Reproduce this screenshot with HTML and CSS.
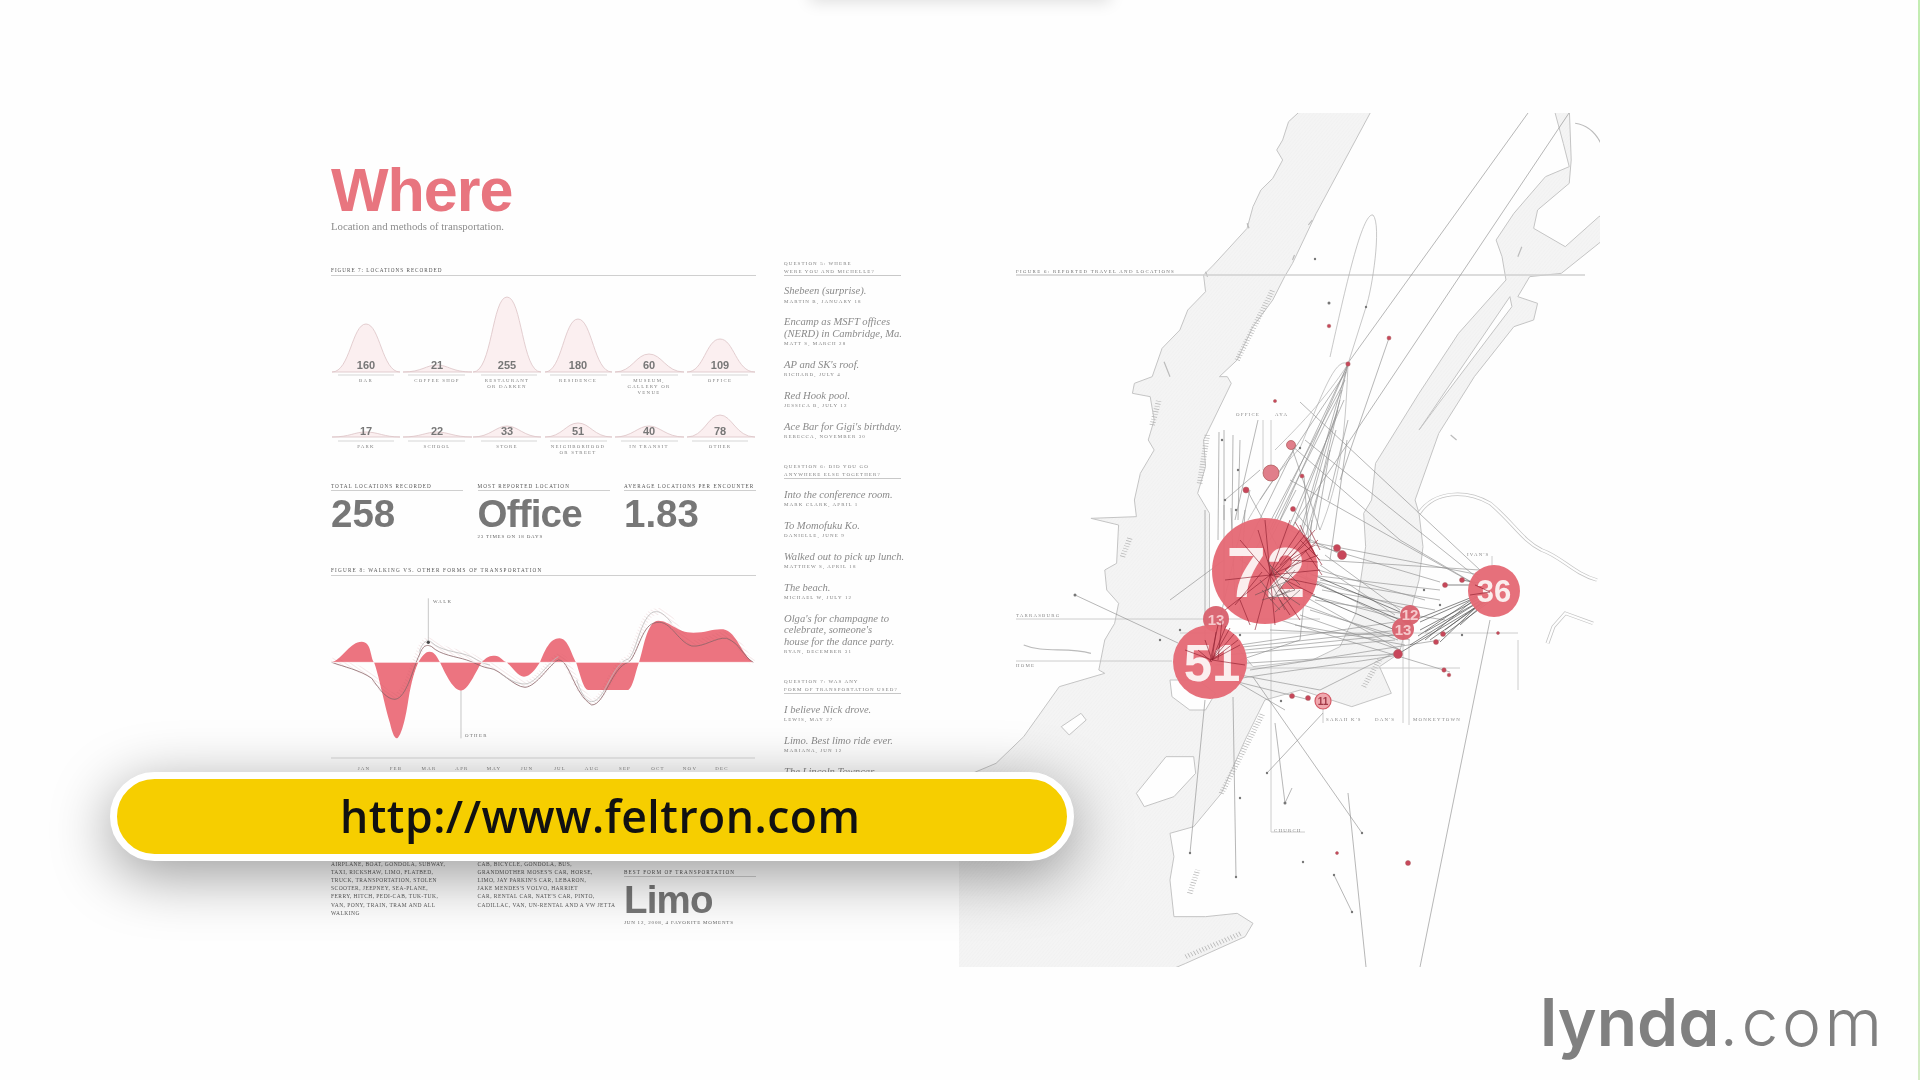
FILE: index.html
```html
<!DOCTYPE html>
<html lang="en">
<head>
<meta charset="utf-8">
<title>Where - feltron.com</title>
<link rel="stylesheet" href="styles.css">
</head>
<body>
<main class="stage">
  <div class="poster">
    <section class="col-left">
      <h1 class="title">Where</h1>
      <p class="subtitle">Location and methods of transportation.</p>

      <h2 class="fig-head">Figure 7: Locations recorded</h2>
      <svg class="bells" viewBox="331 276 425 180" aria-label="Locations recorded">
        <g class="bell">
          <path d="M332 372C350 372 352 324 366 324C380 324 382 372 400 372Z"/>
          <path d="M403 372C422 372 426 365 437 365C448 365 452 372 472 372Z"/>
          <path d="M473 372C492 372 492 297 507 297C522 297 522 372 541 372Z"/>
          <path d="M545 372C562 372 564 319 578 319C592 319 594 372 612 372Z"/>
          <path d="M615 372C632 372 636 354 649 354C662 354 666 372 684 372Z"/>
          <path d="M687 372C704 372 706 339 720 339C734 339 736 372 755 372Z"/>
          <path d="M332 437C350 437 354 432 366 432C378 432 384 437 400 437Z"/>
          <path d="M403 437C420 437 426 432 437 432C448 432 454 437 472 437Z"/>
          <path d="M473 437C490 437 496 426 507 426C518 426 524 437 541 437Z"/>
          <path d="M545 437C562 437 566 423 578 423C590 423 594 437 612 437Z"/>
          <path d="M615 437C632 437 638 426 649 426C660 426 666 437 684 437Z"/>
          <path d="M687 437C704 437 708 415 720 415C732 415 736 437 755 437Z"/>
        </g>
        <path class="rule-soft" d="M338 375H394M408 375H465M481 375H537M550 375H607M621 375H678M692 375H748M338 441H394M408 441H465M481 441H537M550 441H607M621 441H678M692 441H748"/>
        <g class="bell-num">
          <text x="366" y="369">160</text><text x="437" y="369">21</text><text x="507" y="369">255</text><text x="578" y="369">180</text><text x="649" y="369">60</text><text x="720" y="369">109</text>
          <text x="366" y="435">17</text><text x="437" y="435">22</text><text x="507" y="435">33</text><text x="578" y="435">51</text><text x="649" y="435">40</text><text x="720" y="435">78</text>
        </g>
        <g class="tiny-mid">
          <text x="366" y="382">BAR</text><text x="437" y="382">COFFEE SHOP</text><text x="507" y="382">RESTAURANT</text><text x="507" y="388">OR DARKEN</text><text x="578" y="382">RESIDENCE</text><text x="649" y="382">MUSEUM,</text><text x="649" y="388">GALLERY OR</text><text x="649" y="394">VENUE</text><text x="720" y="382">OFFICE</text>
          <text x="366" y="448">PARK</text><text x="437" y="448">SCHOOL</text><text x="507" y="448">STORE</text><text x="578" y="448">NEIGHBORHOOD</text><text x="578" y="454">OR STREET</text><text x="649" y="448">IN TRANSIT</text><text x="720" y="448">OTHER</text>
        </g>
      </svg>

      <div class="stats">
        <div class="stat">
          <h3 class="stat-head">Total locations recorded</h3>
          <p class="stat-value">258</p>
        </div>
        <div class="stat">
          <h3 class="stat-head">Most reported location</h3>
          <p class="stat-value tight">Office</p>
          <p class="stat-note">23 times on 18 days</p>
        </div>
        <div class="stat">
          <h3 class="stat-head">Average locations per encounter</h3>
          <p class="stat-value">1.83</p>
        </div>
      </div>

      <h2 class="fig-head fig-8">Figure 8: Walking vs. other forms of transportation</h2>
      <svg class="wave" viewBox="331 576 425 196" aria-label="Walking vs other transportation">
        <defs>
          <pattern id="ribbon" width="9" height="9" patternUnits="userSpaceOnUse" patternTransform="rotate(-55)">
            <rect class="ribbon-bg" width="9" height="9"/>
            <path class="ribbon-line" d="M0 0V9"/>
          </pattern>
        </defs>
        <g transform="translate(300 460) scale(.33333)">
          <path class="ribbon-white" d="M95 600C130 612 180 622 215 647C240 682 260 708 285 708C320 705 340 610 358 575C370 540 385 537 395 547C420 572 470 575 500 585C530 595 545 612 570 615C600 618 640 670 675 672C710 670 750 600 775 590C810 590 820 690 875 725C915 725 935 610 985 597C1010 580 1025 450 1070 455C1110 445 1130 530 1175 550C1210 555 1250 520 1280 525C1320 540 1330 585 1360 607"/>
          <path class="wave-red" d="M95 607C130 595 150 545 185 545C215 545 210 590 222 607C235 640 250 720 270 790C278 825 285 835 290 835C300 835 315 790 325 720C335 660 345 630 355 607C365 590 375 575 388 575C405 575 410 590 420 607C440 650 460 690 483 692C505 690 525 640 545 607C560 590 570 587 585 587C600 587 605 600 620 607C640 625 655 650 672 650C690 650 705 630 720 607C735 570 750 535 778 535C805 535 815 585 828 607C840 640 850 690 865 690L985 690C1000 680 1005 640 1017 607C1030 570 1040 482 1075 482C1110 482 1130 518 1180 518C1220 518 1240 505 1270 508C1310 515 1325 585 1360 607Z"/>
          <path class="ribbon" d="M95 600C130 612 180 622 215 647C240 682 260 708 285 708C320 705 340 610 358 575C370 540 385 537 395 547C420 572 470 575 500 585C530 595 545 612 570 615C600 618 640 670 675 672C710 670 750 600 775 590C810 590 820 690 875 725C915 725 935 610 985 597C1010 580 1025 450 1070 455C1110 445 1130 530 1175 550C1210 555 1250 520 1280 525C1320 540 1330 585 1360 607"/>
          <path class="wave-line" d="M95 607C130 620 180 630 215 655C240 690 260 718 285 718C320 715 340 620 358 585C370 550 385 555 395 560C420 585 470 590 500 600C530 610 545 622 570 625C600 628 640 680 675 682C710 680 750 610 775 600C810 600 820 700 875 735C915 735 935 620 985 607C1010 590 1025 500 1060 490C1110 470 1130 545 1175 558C1210 563 1250 530 1280 535C1320 550 1330 590 1360 607"/>
          <path class="wave-line light" d="M358 575C370 540 385 537 395 547C420 572 470 575 500 585C530 595 545 612 570 615M600 640C630 660 650 672 675 672C710 670 740 610 775 590M830 660C840 690 855 725 875 725C915 725 935 610 985 597C1010 580 1025 450 1070 455C1085 455 1100 470 1115 490"/>
          <path class="axis-white" d="M95 607H1360"/>
          <path class="callout" d="M385 415V548M483 692V835"/>
          <circle class="callout-dot" cx="385" cy="547" r="5"/>
        </g>
        <text class="tiny" x="433" y="603">WALK</text>
        <text class="tiny" x="465" y="737">OTHER</text>
        <path class="rule-soft" d="M331 758H755"/>
        <g class="tiny-mid">
          <text x="364" y="770">JAN</text><text x="396" y="770">FEB</text><text x="429" y="770">MAR</text><text x="462" y="770">APR</text><text x="494" y="770">MAY</text><text x="527" y="770">JUN</text><text x="560" y="770">JUL</text><text x="592" y="770">AUG</text><text x="625" y="770">SEP</text><text x="658" y="770">OCT</text><text x="690" y="770">NOV</text><text x="722" y="770">DEC</text>
        </g>
      </svg>

      <div class="stats stats-bottom">
        <p class="list-text">Airplane, boat, gondola, subway,<br>taxi, rickshaw, limo, flatbed,<br>truck, transportation, stolen<br>scooter, jeepney, sea-plane,<br>ferry, hitch, pedi-cab, tuk-tuk,<br>van, pony, train, tram and all<br>walking</p>
        <p class="list-text">Cab, bicycle, gondola, bus,<br>grandmother moses's car, horse,<br>limo, jay parkin's car, lebaron,<br>jake mendes's volvo, harriet<br>car, rental car, nate's car, pinto,<br>cadillac, van, un-rental and a vw jetta</p>
        <div class="stat stat-low">
          <h3 class="stat-head">Best form of transportation</h3>
          <p class="stat-value tight">Limo</p>
          <p class="stat-note wide">Jun 12, 2008, 4 favorite moments</p>
        </div>
      </div>
    </section>

    <section class="col-mid">
      <h3 class="q-head">Question 5: Where<br>were you and Michelle?</h3>
      <div class="entry"><p class="entry-title">Shebeen (surprise).</p><p class="entry-sub">Martin B, January 18</p></div>
      <div class="entry"><p class="entry-title">Encamp as MSFT offices<br>(NERD) in Cambridge, Ma.</p><p class="entry-sub">Matt S, March 28</p></div>
      <div class="entry"><p class="entry-title">AP and SK's roof.</p><p class="entry-sub">Richard, July 4</p></div>
      <div class="entry"><p class="entry-title">Red Hook pool.</p><p class="entry-sub">Jessica B, July 12</p></div>
      <div class="entry"><p class="entry-title">Ace Bar for Gigi's birthday.</p><p class="entry-sub">Rebecca, November 30</p></div>

      <h3 class="q-head q-next">Question 6: Did you go<br>anywhere else together?</h3>
      <div class="entry"><p class="entry-title">Into the conference room.</p><p class="entry-sub">Mark Clark, April 1</p></div>
      <div class="entry"><p class="entry-title">To Momofuku Ko.</p><p class="entry-sub">Danielle, June 9</p></div>
      <div class="entry"><p class="entry-title">Walked out to pick up lunch.</p><p class="entry-sub">Matthew S, April 18</p></div>
      <div class="entry"><p class="entry-title">The beach.</p><p class="entry-sub">Michael W, July 12</p></div>
      <div class="entry"><p class="entry-title">Olga's for champagne to<br>celebrate, someone's<br>house for the dance party.</p><p class="entry-sub">Ryan, December 31</p></div>

      <h3 class="q-head q-next">Question 7: Was any<br>form of transportation used?</h3>
      <div class="entry"><p class="entry-title">I believe Nick drove.</p><p class="entry-sub">Lewis, May 27</p></div>
      <div class="entry"><p class="entry-title">Limo. Best limo ride ever.</p><p class="entry-sub">Mariana, Jun 12</p></div>
      <div class="entry"><p class="entry-title">The Lincoln Towncar.</p><p class="entry-sub">Nick, Jun 12</p></div>
    </section>

    <svg class="map" viewBox="959 113 641 854" aria-label="Map of reported travel and locations">
      <defs>
        <pattern id="land" width="7" height="7" patternUnits="userSpaceOnUse" patternTransform="rotate(35)">
          <rect class="land-bg" width="7" height="7"/>
          <path class="land-line" d="M0 0V7"/>
        </pattern>
      </defs>
      <g transform="translate(1000 100) scale(.3953 .33333)">
        <path class="land" d="M755 38L730 65 715 120 700 150 715 180 690 235 660 270 640 320 625 385 575 450 540 495 515 525 520 575 475 630 455 690 410 745 385 830 340 850 335 880 380 890 390 960 375 1020 390 1050 355 1120 340 1200 345 1250 230 1255 300 1275 295 1390 265 1410 270 1470 300 1510 290 1570 265 1620 250 1710 265 1720 150 1760 60 1910-10 1990-110 2040-110 2620 410 2620 470 2590 620 2510 640 2470 600 2440 520 2450 440 2450 430 2340 440 2270 430 2200 490 2180 560 2080 620 1920 670 1800 760 1770 890 1820 990 1780 960 1700 1010 1660 1060 1440 1070 1340 1060 1240 1050 1200 1110 1000 1200 830 1300 680 1350 660 1360 610 1310 590 1340 530 1420 520 1515 430 1600 350 1600 300 1515 350 1430 440 1350 385 1360 330 1440 250 1445 180 1440 20 1400 20 1425 130 1440 200 1380 230 1300 340 1255 420 1270 470 1280 540 1160 700 1060 880 950 1090 940 1200 920 1240 925 1340 900 1540 860 1640 790 1680 640 1700 530 1540 530 1240 500 1180 520 1100 515 1020 540 960 585 850 575 830 555 830 600 780 640 680 690 600 720 530 740 490 800 340 945 20Z"/>
        <path class="hole" d="M1060 990L1290 590 1295 620 1110 910ZM345 2080L420 1970 490 1970 495 2020 440 2090 365 2120ZM155 1880L205 1840 218 1860 175 1905ZM430 1740L435 1790 480 1830 520 1830 545 1780 500 1740Z"/>
        <path class="hole-clean" d="M60 1635L170 1660 230 1660 235 1710 60 1710Z"/>
        <path class="piers" d="M600 780L690 570M385 975L402 900M505 1150L525 1000M310 1370L330 1310M560 2080L665 1840M920 1760L960 1680M480 2380L500 2310M470 2570L610 2500"/>
        <path class="shore" d="M60 1635C110 1660 170 1640 230 1660M790 360L780 375M745 465L740 480M1140 1005L1155 1020M1320 440L1310 470M520 515L525 530M415 785L430 830M630 385L625 370"/>
        <path class="river-out" d="M1060 1240C1100 1170 1180 1170 1240 1210C1300 1270 1320 1320 1370 1350C1420 1370 1450 1420 1510 1440M1385 1630L1400 1580 1430 1540 1500 1570"/>
        <path class="river-in" d="M1060 1240C1100 1170 1180 1170 1240 1210C1300 1270 1320 1320 1370 1350C1420 1370 1450 1420 1510 1440M1385 1630L1400 1580 1430 1540 1500 1570"/>
        <path class="river-out thin" d="M1455 70C1485 75 1505 95 1520 130"/>
      </g>

      <path class="rule-map" d="M1016 275H1585"/>
      <text class="tiny" x="1016" y="273">FIGURE 6: REPORTED TRAVEL AND LOCATIONS</text>

      <path class="net light" d="M1016 619H1320M1016 661H1172M1180 633H1518M1245 668H1460M1271 623V832H1305M1403 637V723M1409 640V725M1323 706V723M1263 420V470M1271 420V470M1492 556V570M1518 640V690"/>
      <path class="net" d="M1528 113L1348 363M1569 113L1332 467 1270 560M1490 620L1420 967M1348 793L1366 967M1253 677L1362 833M1323 713L1267 773M1275 723L1285 803 1292 788M1233 697L1236 877M1205 700L1190 853M1334 875L1352 912M1075 595L1178 643M1300 402L1480 570"/>
      <path class="net curve" d="M1330 357C1345 290 1362 212 1373 215C1382 225 1372 290 1366 307L1348 364C1325 400 1295 430 1275 450M1348 364C1345 440 1340 480 1320 530M1300 448C1320 400 1335 355 1348 364M1300 448C1270 480 1260 500 1248 520"/>
      <path class="net" d="M1348 364L1265 540M1348 364L1280 520M1348 364L1298 540M1348 364L1310 530M1345 380L1250 560M1340 400L1300 540M1347 440L1330 560M1389 338L1340 480M1224 505L1224 600M1231 508L1235 600M1245 510L1240 610M1250 490L1215 640M1296 445L1240 560M1205 510V650M1224 560L1170 600M1291 445L1320 530M1304 476L1310 560M1342 390L1272 530M1338 410L1292 530M1344 400L1283 540M1336 430L1306 535M1330 450L1316 530M1224 430L1224 520M1219 432L1218 540M1233 435L1232 530M1240 440L1238 520M1258 420L1235 520M1346 372L1260 500M1348 420L1328 500M1225 500L1260 470M1296 490L1270 540M1293 509L1310 530M1312 520L1300 640M1290 530L1342 555M1247 490L1290 570M1291 445L1400 540 1485 590M1305 440L1480 580"/>
      <path class="net" d="M1272 560L1403 625M1280 570L1410 610M1290 590L1405 620M1290 600L1398 640M1310 575L1440 590M1320 580L1440 600M1315 600L1445 620M1300 615L1400 650M1320 560L1480 570M1300 540L1480 575M1240 560L1400 650M1290 480L1485 590M1280 620L1450 672M1215 650L1400 630M1225 655L1395 640M1215 665L1398 654M1230 680C1290 670 1340 665 1398 655M1240 675L1320 690 1400 650M1230 680L1310 700M1230 678L1285 710M1315 545L1440 582M1318 570L1425 600M1322 590L1435 610M1310 610L1410 640M1295 625L1405 645M1270 630L1400 636M1240 645L1395 622M1245 650L1395 635M1240 660L1300 640M1250 670L1440 640M1325 555L1400 610M1320 565L1395 615"/>
      <path class="net dark" d="M1490 590L1415 620M1490 593L1420 630M1488 588L1425 640M1490 595L1410 645M1490 598L1430 640M1492 592L1440 642M1490 596L1445 630M1488 600L1460 625M1488 600L1398 654M1492 600L1445 634M1485 585L1445 585M1490 585L1462 580M1290 565L1400 612M1285 570L1400 620M1300 590L1395 630M1488 592L1420 622M1489 596L1425 632M1486 590L1418 636"/>

      <g class="rings">
        <circle class="pin-soft" cx="1291" cy="445" r="4.5"/>
        <circle class="pin-soft" cx="1271" cy="473" r="8"/>
        <circle class="pin" cx="1246" cy="490" r="3"/>
        <circle class="pin" cx="1389" cy="338" r="2"/>
        <circle class="pin" cx="1348" cy="364" r="2.2"/>
        <circle class="pin" cx="1329" cy="326" r="1.8"/>
        <circle class="pin" cx="1275" cy="401" r="1.6"/>
        <circle class="pin" cx="1302" cy="476" r="2"/>
        <circle class="pin" cx="1408" cy="863" r="2.5"/>
        <circle class="pin" cx="1337" cy="853" r="1.5"/>
        <circle class="pin" cx="1337" cy="548" r="3.5"/>
        <circle class="pin" cx="1342" cy="555" r="4.5"/>
        <circle class="pin" cx="1293" cy="509" r="2.5"/>
        <circle class="pin" cx="1445" cy="585" r="2.5"/>
        <circle class="pin" cx="1462" cy="580" r="2.5"/>
        <circle class="pin" cx="1443" cy="634" r="2.5"/>
        <circle class="pin" cx="1436" cy="642" r="2.5"/>
        <circle class="pin" cx="1398" cy="654" r="4.5"/>
        <circle class="pin" cx="1444" cy="670" r="2.2"/>
        <circle class="pin" cx="1449" cy="675" r="1.8"/>
        <circle class="pin" cx="1292" cy="696" r="2.5"/>
        <circle class="pin" cx="1308" cy="698" r="2.5"/>
        <circle class="pin" cx="1498" cy="633" r="1.5"/>
        <circle class="dot" cx="1281" cy="701" r="1.2"/>
        <circle class="dot" cx="1329" cy="303" r="1.5"/>
        <circle class="dot" cx="1315" cy="259" r="1.2"/>
        <circle class="dot" cx="1366" cy="307" r="1.2"/>
        <circle class="dot" cx="1303" cy="862" r="1.2"/>
        <circle class="dot" cx="1240" cy="798" r="1.2"/>
        <circle class="dot" cx="1075" cy="595" r="1.5"/>
        <circle class="dot" cx="1267" cy="773" r="1.2"/>
        <circle class="dot" cx="1362" cy="833" r="1.2"/>
        <circle class="dot" cx="1285" cy="803" r="1.5"/>
        <circle class="dot" cx="1236" cy="877" r="1.2"/>
        <circle class="dot" cx="1190" cy="853" r="1.2"/>
        <circle class="dot" cx="1334" cy="875" r="1.2"/>
        <circle class="dot" cx="1352" cy="912" r="1.2"/>
        <circle class="dot" cx="1225" cy="500" r="1.2"/>
        <circle class="dot" cx="1222" cy="440" r="1.2"/>
        <circle class="dot" cx="1238" cy="470" r="1.2"/>
        <circle class="dot" cx="1300" cy="448" r="1.2"/>
        <circle class="dot" cx="1236" cy="510" r="1.2"/>
        <circle class="dot" cx="1240" cy="635" r="1.2"/>
        <circle class="dot" cx="1180" cy="630" r="1.2"/>
        <circle class="dot" cx="1160" cy="640" r="1.2"/>
        <circle class="dot" cx="1462" cy="635" r="1.2"/>
        <circle class="dot" cx="1424" cy="590" r="1.2"/>
        <circle class="dot" cx="1440" cy="605" r="1.2"/>

        <circle class="hub" cx="1265" cy="571" r="53"/>
        <circle class="hub dim" cx="1216" cy="619" r="13"/>
        <circle class="hub" cx="1210" cy="662" r="37"/>
        <circle class="hub" cx="1494" cy="591" r="26"/>
        <circle class="hub dim" cx="1410" cy="615" r="10"/>
        <circle class="hub dim" cx="1403" cy="629" r="11"/>
        <circle class="hub ring" cx="1323" cy="701" r="8"/>
      </g>

      <g class="hub-num">
        <text class="n72" x="1266" y="597">72</text>
        <text class="n51" x="1212" y="681">51</text>
        <text class="n36" x="1494" y="602">36</text>
        <text class="n13" x="1216" y="625">13</text>
        <text class="n13" x="1410" y="620">12</text>
        <text class="n13" x="1403" y="635">13</text>
      </g>
      <text class="n11" x="1323" y="705">11</text>

      <path class="burst" d="M1270 575L1225 610M1270 575L1240 540M1270 575L1275 625M1270 575L1310 540M1270 575L1318 555M1270 575L1320 570M1270 575L1318 585M1270 575L1300 530M1270 575L1290 520M1270 575L1255 630M1262 572L1235 605M1275 575L1315 530M1290 560L1315 545M1290 560L1318 562M1285 580L1315 595M1270 575L1300 620M1218 660L1222 620M1210 662L1218 625M1212 660L1238 640M1212 660L1240 645M1212 660L1230 628M1212 660L1245 665M1212 660L1185 650M1300 540L1320 560M1305 550L1322 575M1490 592L1475 585M1490 592L1470 595M1310 530L1320 550M1300 525L1315 555M1295 522L1322 565M1285 570L1318 540M1280 565L1305 535M1272 575L1258 530M1270 575L1265 520M1270 575L1225 580M1212 660L1216 632M1212 660L1226 626M1212 660L1234 634M1212 660L1205 640M1212 662L1198 650M1280 600L1290 615M1240 600L1250 625"/>
      <path class="burst soft" d="M1268 560L1285 600M1268 590L1300 560M1255 595L1290 580M1275 595L1295 570M1280 585L1290 600M1260 580L1275 600M1285 570L1300 585M1262 600L1295 590M1272 585L1285 610M1278 590L1300 605M1262 590L1280 610M1290 590L1270 600M1300 590L1275 612M1270 565L1295 590"/>

      <g class="tiny-map">
        <text x="1236" y="416">OFFICE</text><text x="1275" y="416">AYA</text>
        <text x="1016" y="617">TARRASBURG</text><text x="1016" y="667">HOME</text>
        <text x="1326" y="721">SARAH K'S</text><text x="1375" y="721">DAN'S</text><text x="1413" y="721">MONKEYTOWN</text>
        <text x="1467" y="556">IVAN'S</text><text x="1274" y="832">CHURCH</text>
      </g>
    </svg>
  </div>

  <div class="top-shade"></div>
  <div class="green-edge"></div>

  <div class="pill"><span class="pill-text">http://www.feltron.com</span></div>

  <div class="logo"><span class="logo-bold">lynda</span><span class="logo-light">.com</span></div>
</main>
</body>
</html>
```
FILE: styles.css
```css
* { box-sizing: border-box; margin: 0; padding: 0; }
html, body { width: 1920px; height: 1080px; background: #fefefe; overflow: hidden; }
.stage { position: relative; width: 1920px; height: 1080px; overflow: hidden; font-family: "Liberation Sans", Arial, sans-serif; }

.poster { display: flex; align-items: flex-start; padding: 113px 0 0 331px; filter: blur(.6px); }

.col-left { width: 425px; padding-top: 48px; flex: none; }
.title { font: 700 61px/59px "Liberation Sans", Arial, sans-serif; letter-spacing: -1px; color: #e8757f; }
.subtitle { font: 10.8px/12px "Liberation Serif", serif; color: #8d8d8d; }

.fig-head { margin-top: 35px; height: 8.5px; font: 400 5.2px/7px "Liberation Serif", serif; letter-spacing: 1px; text-transform: uppercase; color: #555; border-bottom: 1.5px solid #cfcfcf; white-space: nowrap; }
.fig-8 { margin-top: 26px; letter-spacing: 1.2px; }

.bells { display: block; width: 425px; height: 180px; }
.bell path { fill: #fbeff0; stroke: #dcc3c5; stroke-width: .8; }
.rule-soft { fill: none; stroke: #d6d6d6; stroke-width: 1; }
.bell-num text { font: 700 11px "Liberation Sans", sans-serif; fill: #777; text-anchor: middle; }
.tiny-mid text { font: 4.9px "Liberation Serif", serif; letter-spacing: 1.25px; fill: #808080; text-anchor: middle; }
.tiny { font: 4.9px "Liberation Serif", serif; letter-spacing: 1.3px; fill: #707070; }

.stats { display: grid; grid-template-columns: 132px 132px 132px; column-gap: 14.5px; margin-top: 27px; }
.stat-head { height: 8.5px; font: 400 5.2px/7px "Liberation Serif", serif; letter-spacing: 1.05px; text-transform: uppercase; color: #555; border-bottom: 1.5px solid #cfcfcf; white-space: nowrap; overflow: visible; }
.stat-value { margin-top: 3px; font: 700 38.5px/40px "Liberation Sans", sans-serif; color: #777; }
.tight { letter-spacing: -.8px; }
.stat-note { font: 5px/8px "Liberation Serif", serif; letter-spacing: .8px; text-transform: uppercase; color: #666; white-space: nowrap; margin-top: -1px; }

.wave { display: block; width: 425px; height: 196px; }
.wave-red { fill: #ec7480; }
.ribbon-white { fill: none; stroke: #fff; stroke-width: 20; }
.ribbon { fill: none; stroke: url(#ribbon); stroke-width: 20; opacity: .6; }
.ribbon-bg { fill: transparent; }
.ribbon-line { stroke: #a84853; stroke-width: 1.2; fill: none; }
.wave-line { fill: none; stroke: #8a6468; stroke-width: 2.4; }
.wave-line.light { stroke: #bdbdbd; }
.axis-white { stroke: #fff; stroke-width: 2; fill: none; }
.callout { stroke: #aaa; stroke-width: 2; fill: none; }
.callout-dot { fill: #444; }

.stats-bottom { margin-top: 88px; }
.list-text { font: 5.5px/8.2px "Liberation Serif", serif; letter-spacing: .45px; text-transform: uppercase; color: #5a5a5a; white-space: nowrap; }
.stat-low { padding-top: 9px; }
.wide { margin-top: -1px; }

.col-mid { width: 117px; margin-left: 28px; padding-top: 145.5px; flex: none; }
.q-head { height: 17px; padding-top: 1px; font: 400 5px/8px "Liberation Serif", serif; letter-spacing: 1.1px; text-transform: uppercase; color: #808080; border-bottom: 1px solid #c8c8c8; white-space: nowrap; }
.q-next { margin-top: 20px; }
.entry { margin-top: 9.5px; }
.entry-title { font: italic 400 10.6px/11.5px "Liberation Serif", serif; color: #8a8a8a; white-space: nowrap; }
.entry-sub { font: 5px/10px "Liberation Serif", serif; letter-spacing: 1.1px; text-transform: uppercase; color: #808080; white-space: nowrap; }

.map { display: block; width: 641px; height: 854px; margin-left: 58px; flex: none; }
.land { fill: url(#land); stroke: #c4c4c4; stroke-width: 1; vector-effect: non-scaling-stroke; }
.land-bg { fill: #f4f4f4; }
.land-line { stroke: #e9e9e9; stroke-width: 1.5; fill: none; }
.hole { fill: #fefefe; stroke: #c4c4c4; stroke-width: 1; vector-effect: non-scaling-stroke; }
.hole-clean { fill: #fefefe; stroke: none; }
.piers { fill: none; stroke: #b4b4b4; stroke-width: 14; stroke-dasharray: 2 6; }
.shore { fill: none; stroke: #bbb; stroke-width: 1.2; vector-effect: non-scaling-stroke; }
.river-out { fill: none; stroke: #c4c4c4; stroke-width: 10; }
.river-out.thin { stroke: #bbb; stroke-width: 3; }
.river-in { fill: none; stroke: #fefefe; stroke-width: 6; }
.rule-map { stroke: #d0d0d0; stroke-width: 1.5; fill: none; }
.net { fill: none; stroke: #8f8f8f; stroke-width: .65; }
.net.light { stroke: #c2c2c2; stroke-width: .8; }
.net.dark { stroke: #555; stroke-width: .7; }
.net.curve { stroke: #aaa; }
.pin { fill: #c8465a; stroke: #a66; stroke-width: .5; }
.pin-soft { fill: #e07e8a; stroke: #a55; stroke-width: .7; }
.dot { fill: #777; }
.hub { fill: #e56a76; fill-opacity: .96; }
.hub.dim { fill: #d9626e; }
.hub.ring { fill: #efa3aa; stroke: #d45a66; stroke-width: 1.2; }
.hub-num text { font: 700 10px "Liberation Sans", sans-serif; fill: #fbeeee; text-anchor: middle; }
.hub-num .n72 { font-size: 71px; }
.hub-num .n51 { font-size: 51px; }
.hub-num .n36 { font-size: 31px; }
.hub-num .n13 { font-size: 15px; fill: #f6c9cc; }
.n11 { font: 700 10px "Liberation Sans", sans-serif; fill: #a23a48; text-anchor: middle; }
.burst { fill: none; stroke: #8e1f2e; stroke-width: .9; stroke-opacity: .7; }
.burst.soft { stroke: #5a4a4c; stroke-width: .8; stroke-opacity: .65; }
.tiny-map text { font: 4.9px "Liberation Serif", serif; letter-spacing: 1.2px; fill: #888; }

.top-shade { position: absolute; left: 810px; top: -24px; width: 300px; height: 24px; box-shadow: 0 2px 16px rgba(0,0,0,.13); }
.green-edge { position: absolute; right: 0; top: 0; width: 2px; height: 1080px; background: linear-gradient(#c4edb3, #a5dc90 50%, #d5ecc6); }

.pill { position: absolute; left: 110px; top: 772px; width: 964px; height: 89px; display: flex; align-items: center; padding: 0 0 0 223px; background: #f6ce00; border: 7px solid #fff; border-radius: 45px; box-shadow: 0 14px 60px rgba(0,0,0,.4); }
.pill-text { font: 600 44.5px/1 "Open Sans", "Noto Sans", sans-serif; color: #111; letter-spacing: .5px; filter: blur(.4px); }

.logo { position: absolute; left: 1540px; top: 980px; font: 66px/84px Inter, "Noto Sans", sans-serif; color: #808080; font-feature-settings: "cv11" 1; white-space: nowrap; filter: blur(.5px); }
.logo-bold { font-weight: 600; letter-spacing: 0; }
.logo-light { font-weight: 300; letter-spacing: 3.5px; }
```
